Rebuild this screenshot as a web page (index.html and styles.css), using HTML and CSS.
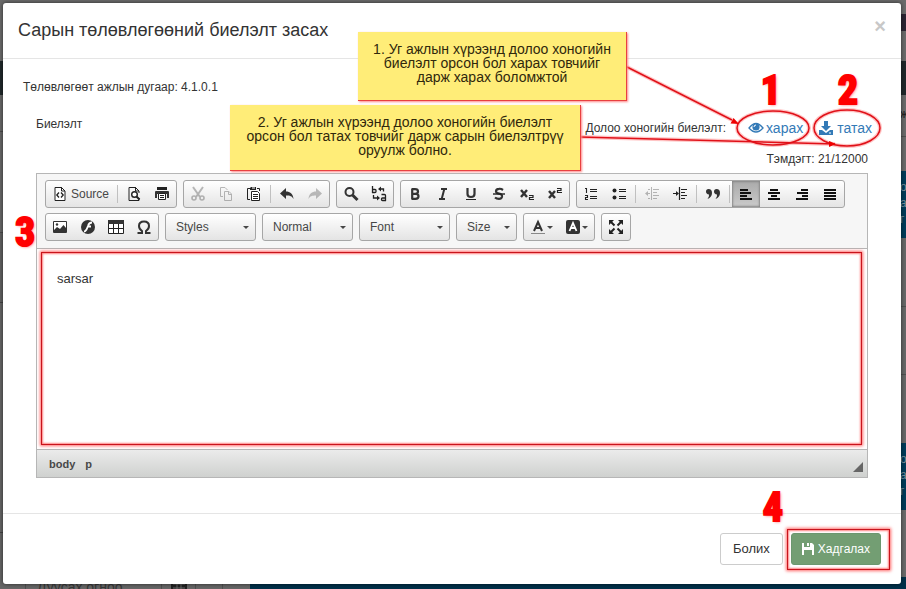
FILE: index.html
```html
<!DOCTYPE html>
<html lang="mn">
<head>
<meta charset="utf-8">
<meta name="viewport" content="width=device-width, initial-scale=1">
<title>Сарын төлөвлөгөөний биелэлт засах</title>
<link rel="stylesheet" href="styles.css">
</head>
<body>
<div class="backdrop" aria-hidden="true">
  <div class="edge-left"></div>
  <div class="edge-right">
    <span class="peek peek-row">ж</span>
    <span class="peek peek-card">о<br>аз<br>г</span>
    <span class="peek peek-card2">о<br>аз<br>г</span>
  </div>
  <div class="edge-bottom">
    <span class="date-label">Дуусах огноо</span>
    <svg class="calendar" width="16" height="16" viewBox="0 0 16 16"><path d="M0 2h16v14H0zM3 0h2v3H3zM11 0h2v3h-2z" fill="#222"/><path d="M2 7h12M2 11h12M6 5v9M10 5v9" stroke="#666"/></svg>
  </div>
</div>

<div class="modal" role="dialog" aria-labelledby="title">
  <header class="modal-header">
    <h1 id="title">Сарын төлөвлөгөөний биелэлт засах</h1>
    <button class="close" type="button" aria-label="Хаах">×</button>
  </header>

  <main class="modal-body">
    <p class="work-number">Төлөвлөгөөт ажлын дугаар: 4.1.0.1</p>
    <div class="field">
      <div class="field-head">
        <label for="report">Биелэлт</label>
        <div class="weekly">
          <span class="weekly-label">Долоо хоногийн биелэлт:</span>
          <a class="view" href="#view"><svg width="16" height="14" viewBox="0 0 16 14"><path d="M1 7Q8-2 15 7Q8 15 1 7Z" fill="none" stroke="currentColor" stroke-width="1.3"/><circle cx="8" cy="6" r="3.6" fill="currentColor"/><path d="M6 6a2 2 0 0 1 2-2" fill="none" stroke="#fff"/></svg>харах</a>
          <a class="download" href="#download"><svg width="14" height="14" viewBox="0 0 14 14"><path d="M5 0h4v5h3L7 10 2 5h3zM0 9h3l4 3 4-3h3v5H0z" fill="currentColor"/><path d="M10 12h2" stroke="#fff"/></svg>татах</a>
        </div>
      </div>
      <p class="counter">Тэмдэгт: 21/12000</p>

      <div class="editor">
        <div class="toolbar" role="toolbar">
          <div class="group">
            <button type="button" class="source"><svg viewBox="0 0 16 16"><path d="M3 1.500h6.500L13 5v9.500H3z" fill="#fff" stroke="#222"/><path d="M9.500 1v4H13" fill="none" stroke="#222"/><path d="M7 6.500 4.800 9 7 11.500M9 6.500 11.200 9 9 11.500" fill="none" stroke="#222" stroke-width="1.300"/></svg>Source</button>
            <span class="sep"></span>
            <button type="button" aria-label="Preview"><svg viewBox="0 0 16 16"><path d="M13 12v2.500H3v-13h6.500L13 5v2" fill="none" stroke="#222"/><path d="M9.500 1v4H13" fill="none" stroke="#222"/><circle cx="8.500" cy="8.500" r="2.800" fill="#fff" stroke="#222" stroke-width="1.400"/><path d="m10.500 10.500 3 3" stroke="#222" stroke-width="2"/></svg></button>
            <button type="button" aria-label="Print"><svg viewBox="0 0 16 16"><path d="M3 1h10v3H3z" fill="#222"/><path d="M1 6q0-1 1-1h12q1 0 1 1v6h-2V8H3v4H1z" fill="#333"/><path d="M4.500 7.500h7v6h-7z" fill="#fff" stroke="#222"/><path d="M6 9.500h4M6 11.500h4" stroke="#222"/></svg></button>
          </div>
          <div class="group">
            <button type="button" class="off" disabled aria-label="Cut"><svg viewBox="0 0 16 16"><path d="m3 1 7 10M13 1 6 11" stroke="#222" stroke-width="2"/><circle cx="4" cy="12" r="2" fill="none" stroke="#222" stroke-width="1.600"/><circle cx="12" cy="12" r="2" fill="none" stroke="#222" stroke-width="1.600"/></svg></button>
            <button type="button" class="off" disabled aria-label="Copy"><svg viewBox="0 0 16 16"><path d="M5 10.500H2.500v-9H7L9.500 4M6.500 5.500H11L13.500 8v6.500h-7zM10.500 6v2.500h3" fill="none" stroke="#222"/></svg></button>
            <button type="button" aria-label="Paste"><svg viewBox="0 0 16 16"><path d="M4 2.500H1.500v11H4M11 2.500h2.500V5" fill="none" stroke="#222"/><path d="M5 1h5v3H4V2z" fill="#222"/><path d="M6 2h3" stroke="#fff"/><path d="M5.500 5.500h6l2 2v7h-8z" fill="#fff" stroke="#222"/><path d="M7 8.500h5M7 10.500h5M7 12.500h5" stroke="#222"/></svg></button>
            <span class="sep"></span>
            <button type="button" aria-label="Undo"><svg viewBox="0 0 16 16"><path d="M1 7.500 7 2v3.500c4 0 7 2 7.500 7.500C13 10 11 9.500 7 9.500V13z" fill="#333"/></svg></button>
            <button type="button" class="off" disabled aria-label="Redo"><svg viewBox="0 0 16 16"><path d="M15 7.500 9 2v3.500c-4 0-7 2-7.500 7.500C3 10 5 9.500 9 9.500V13z" fill="#333"/></svg></button>
          </div>
          <div class="group">
            <button type="button" aria-label="Find"><svg viewBox="0 0 16 16"><circle cx="6.500" cy="6" r="4" fill="none" stroke="#333" stroke-width="2"/><path d="m9.500 9 5 5" stroke="#333" stroke-width="3"/></svg></button>
            <button type="button" aria-label="Replace"><svg viewBox="0 0 16 16"><path d="M1.500 0v7M1 3.500h3q1 0 1 1v1q0 1-1 1H1M10.500 8.500h3q1 0 1 1v5.500M15 14.500h-3.500q-1 0-1-1v-.500q0-1 1-1H15M9 3h3.500v2.500M2.500 9v3H6" fill="none" stroke="#222" stroke-width="1.300"/><path d="m7 3 3-2.500v5zM9 12l-3-2.500v5z" fill="#222"/></svg></button>
          </div>
          <div class="group">
            <button type="button" aria-label="Bold"><svg viewBox="0 0 16 16"><path d="M4.500 3.200H8q3 0 3 2.300Q11 7.800 8 7.800H5M5 7.800h3.500q3 0 3 2.500t-3 2.500h-4M5.200 3v10" fill="none" stroke="#333" stroke-width="2.200"/></svg></button>
            <button type="button" aria-label="Italic"><svg viewBox="0 0 16 16"><path d="M6 3h6M4 13h6M9.300 3 6.700 13" stroke="#333" stroke-width="2"/></svg></button>
            <button type="button" aria-label="Underline"><svg viewBox="0 0 16 16"><path d="M4.500 2v6q0 3 3.500 3t3.500-3V2" fill="none" stroke="#333" stroke-width="2.200"/><path d="M3 13.500h10" stroke="#222"/></svg></button>
            <button type="button" aria-label="Strikethrough"><svg viewBox="0 0 16 16"><path d="M12 4Q10 2.500 8 2.800 5 3 5 5.200 5 7 8 7.600 11.500 8.300 11 10.700 10.500 12.800 8 12.800 5.500 12.800 4 11.500" fill="none" stroke="#333" stroke-width="2.200"/><path d="M2 8h12" stroke="#222" stroke-width="1.400"/></svg></button>
            <button type="button" aria-label="Subscript"><svg viewBox="0 0 16 16"><path d="m2 4 6 7M8 4l-6 7" stroke="#333" stroke-width="2.400"/><path d="M10 9.500h4v2h-3.500v2H15" fill="none" stroke="#222" stroke-width="1.200"/></svg></button>
            <button type="button" aria-label="Superscript"><svg viewBox="0 0 16 16"><path d="m2 5 6 7M8 5l-6 7" stroke="#333" stroke-width="2.400"/><path d="M10 2.500h4v2h-3.500v2H15" fill="none" stroke="#222" stroke-width="1.200"/></svg></button>
          </div>
          <div class="group">
            <button type="button" aria-label="Numbered list"><svg viewBox="0 0 16 16"><path d="M7 3.500h7M7 5.500h7M7 10.500h7M7 12.500h7" stroke="#222" stroke-width="1.200"/><path d="M2 2.500h1.500V7M2 9.500h2.500v2H2.500v2H5" fill="none" stroke="#222" stroke-width="1.100"/></svg></button>
            <button type="button" aria-label="Bulleted list"><svg viewBox="0 0 16 16"><path d="M8 3.500h7M8 5.500h7M8 10.500h7M8 12.500h7" stroke="#222" stroke-width="1.200"/><circle cx="3.500" cy="4.500" r="2" fill="#222"/><circle cx="3.500" cy="11.500" r="2" fill="#222"/></svg></button>
            <span class="sep"></span>
            <button type="button" class="off" disabled aria-label="Outdent"><svg viewBox="0 0 16 16"><path d="M7.500 1v13M9 3.500h6M9 6.500h4M9 9.500h6M9 12.500h4M2 7.500h4M4 3.500h2M4 12.500h2" stroke="#222"/><path d="m1 7.500 3-2.500v5z" fill="#222"/></svg></button>
            <button type="button" aria-label="Indent"><svg viewBox="0 0 16 16"><path d="M7.500 1v13M9 3.500h6M9 6.500h4M9 9.500h6M9 12.500h4M1 7.500h4" stroke="#222" stroke-width="1.200"/><path d="M7 7.500 4 5v5z" fill="#222"/></svg></button>
            <span class="sep"></span>
            <button type="button" aria-label="Quote"><svg viewBox="0 0 16 16"><path d="M3.500 3Q7 3 7 7q0 4-4.500 6 2-3 1.500-4.500Q1 8 1 5.500 1 3 3.500 3zM11.500 3Q15 3 15 7q0 4-4.500 6 2-3 1.500-4.500Q9 8 9 5.500 9 3 11.500 3z" fill="#333"/></svg></button>
            <span class="sep"></span>
            <button type="button" class="on" aria-pressed="true" aria-label="Align left"><svg viewBox="0 0 16 16"><path d="M2 4h8M2 7h11M2 10h7M2 13h12" stroke="#111" stroke-width="2"/></svg></button>
            <button type="button" aria-label="Center"><svg viewBox="0 0 16 16"><path d="M4 4h8M2 7h12M5 10h6M2 13h12" stroke="#111" stroke-width="2"/></svg></button>
            <button type="button" aria-label="Align right"><svg viewBox="0 0 16 16"><path d="M7 4h7M3 7h11M8 10h6M2 13h12" stroke="#111" stroke-width="2"/></svg></button>
            <button type="button" aria-label="Justify"><svg viewBox="0 0 16 16"><path d="M2 4h12M2 7h12M2 10h12M2 13h12" stroke="#111" stroke-width="2"/></svg></button>
          </div>
          <div class="break"></div>
          <div class="group">
            <button type="button" aria-label="Image"><svg viewBox="0 0 16 16"><path d="M1.500 2.500h13v11h-13z" fill="#fff" stroke="#333"/><path d="m2 11 3-3 3 2 3.500-4L14 9v4H2z" fill="#333"/><circle cx="5" cy="5.500" r="1.200" fill="#333"/></svg></button>
            <button type="button" aria-label="Flash"><svg viewBox="0 0 16 16"><circle cx="8" cy="8" r="7" fill="#333"/><path d="M12 3.500Q9 3.500 8 7L6.500 10.500Q5.500 12.500 4 12.500M7.500 7.500h3.500" fill="none" stroke="#fff" stroke-width="1.800"/></svg></button>
            <button type="button" aria-label="Table"><svg viewBox="0 0 16 16"><path d="M.5 1.500h15v13H.5z" fill="#fff" stroke="#222"/><path d="M0 1h16v4H0z" fill="#333"/><path d="M1 9.500h14M5.500 5v9M10.500 5v9" stroke="#222"/></svg></button>
            <button type="button" aria-label="Special character"><svg viewBox="0 0 16 16"><path d="M1.500 14H6v-2Q3 10 3 7 3 2.500 8 2.500T13 7q0 3-3 5v2h4.500" fill="none" stroke="#333" stroke-width="2"/></svg></button>
          </div>
          <span class="combo"><select aria-label="Styles"><option>Styles</option></select></span>
          <span class="combo"><select aria-label="Format"><option>Normal</option></select></span>
          <span class="combo"><select aria-label="Font"><option>Font</option></select></span>
          <span class="combo small"><select aria-label="Size"><option>Size</option></select></span>
          <div class="group">
            <button type="button" class="drop" aria-label="Text color"><svg viewBox="0 0 16 16"><path d="m4 12 4-9 4 9M5.500 9h5" fill="none" stroke="#333" stroke-width="2"/><path d="M1 14.500h14" stroke="#888"/></svg></button>
            <button type="button" class="drop" aria-label="Background color"><svg viewBox="0 0 16 16"><rect x="1" y="1" width="14" height="14" rx="2" fill="#333"/><path d="m4.500 12 3.500-8 3.500 8M6 9h4" fill="none" stroke="#fff" stroke-width="1.800"/></svg></button>
          </div>
          <div class="group">
            <button type="button" aria-label="Maximize"><svg viewBox="0 0 16 16"><path d="m2 2 4.500 4.500M14 2 9.500 6.500M2 14l4.500-4.500M14 14 9.500 9.500" stroke="#222" stroke-width="2"/><path d="M1 1h5L1 6zM15 1h-5l5 5zM1 15h5l-5-5zM15 15h-5l5-5z" fill="#222"/></svg></button>
          </div>
        </div>
        <div class="contents">
          <textarea id="report" spellcheck="false">sarsar</textarea>
          <span class="mark"></span>
        </div>
        <div class="status"><span>body</span><span>p</span><i class="resizer"></i></div>
      </div>
    </div>
  </main>

  <footer class="modal-footer">
    <button class="btn" type="button">Болих</button>
    <div class="save-wrap">
      <button class="btn save" type="button"><svg width="12" height="12" viewBox="0 0 12 12"><path d="M0 0h2v4h6V0h2l2 2v10h-2V7H2v5H0zM5 0h2v3H5z" fill="#fff"/></svg>Хадгалах</button>
      <span class="mark"></span>
    </div>
  </footer>

  <div class="notes">
    <svg class="arrows" width="330" height="120" viewBox="570 40 330 120">
      <g class="shade"><path d="M627 67 732 120M580 137l255 7"/><ellipse cx="773" cy="128" rx="36" ry="17"/><ellipse cx="847" cy="128" rx="33" ry="18"/></g>
      <g class="line"><path d="M627 67 732 120M580 137l255 7"/><ellipse cx="773" cy="128" rx="36" ry="17"/><ellipse cx="847" cy="128" rx="33" ry="18"/></g>
      <path d="m739 124-8.500-.5 3-5.500zM836 144l-7 3v-6z" fill="#e00"/>
    </svg>
    <p class="note note-1">1. Уг ажлын хүрээнд долоо хоногийн<br>биелэлт орсон бол харах товчийг<br>дарж харах боломжтой</p>
    <p class="note note-2">2. Уг ажлын хүрээнд долоо хоногийн биелэлт<br>орсон бол татах товчийг дарж сарын биелэлтрүү<br>оруулж болно.</p>
    <span class="num num-1">1</span>
    <span class="num num-2">2</span>
    <span class="num num-3">3</span>
    <span class="num num-4">4</span>
  </div>
</div>
</body>
</html>
```
FILE: styles.css
```css
* { box-sizing: border-box; }
body {
  margin: 0;
  min-height: 100vh;
  padding: 3px 5px 5px 3px;
  position: relative;
  overflow: hidden;
  background: #6b6b6b;
  color: #333;
  font: 12px/18px "Liberation Sans", Arial, sans-serif;
}
h1, p { margin: 0; }
button, select, textarea { font: inherit; color: inherit; }

/* page behind the dialog */
.backdrop { position: absolute; inset: 0; }
.edge-left, .edge-right { position: absolute; top: 0; bottom: 0; width: 20px; }
.edge-left {
  left: 0;
  background: linear-gradient(#6b6b6b 61px, #20282b 61px 95px, #686868 95px 131px, #4c4c4c 131px 132px, #686868 132px 232px, #4c4c4c 232px 233px, #626262 233px 302px, #444 302px 303px, #666 303px 532px, #444 532px 533px, #666 533px);
}
.edge-right {
  right: 0;
  background: linear-gradient(#6b6b6b 14px, #2c2432 14px 31px, #6b6b6b 31px 61px, #20282b 61px 95px, #6b6b6b 95px 136px, #505050 136px 137px, #6b6b6b 137px 171px, #003c5a 171px 238px, #686868 238px 306px, #505050 306px 307px, #686868 307px 374px, #505050 374px 375px, #686868 375px 443px, #003c5a 443px 510px, #6b6b6b 510px 579px, #003049 579px);
}
.peek { position: absolute; left: 14px; line-height: 16px; color: #78909c; }
.peek-row { top: 106px; color: #222; }
.peek-card { top: 179px; }
.peek-card2 { top: 451px; }
.edge-bottom {
  position: absolute;
  inset: auto 0 0 0;
  height: 12px;
  overflow: hidden;
  background: linear-gradient(90deg, #666 25px, #505050 25px 26px, #666 26px 161px, #505050 161px 162px, #666 162px 195px, #505050 195px 196px, #666 196px 222px, #505050 222px 223px, #666 223px 250px, #003049 250px);
}
.date-label { position: absolute; left: 37px; top: 1px; font-size: 14px; color: #383838; }
.calendar { position: absolute; left: 171px; top: 0; }

.modal {
  position: relative;
  background: #fff;
  border-radius: 3px;
  box-shadow: 0 0 4px rgba(0, 0, 0, .6);
}
.modal-header {
  display: flex;
  justify-content: space-between;
  height: 56px;
  padding: 15px;
  border-bottom: 1px solid #e5e5e5;
}
h1 { font-size: 18px; line-height: 25px; font-weight: 400; }
.close {
  align-self: flex-start;
  padding: 0;
  border: 0;
  background: none;
  color: #c8c8c8;
  font-size: 20px;
  line-height: 16px;
  font-weight: 700;
}
.modal-body { padding: 19px 33px 35px; }
.work-number { margin-left: -13px; }
.field-head { display: flex; justify-content: space-between; align-items: flex-start; padding-top: 19px; }
.weekly { display: flex; align-items: center; margin: 3px -4px 0 0; line-height: 20px; }
.weekly a { display: flex; align-items: center; color: #337ab7; font-size: 14px; text-decoration: none; }
.view { gap: 2px; margin-left: 22px; }
.download { gap: 4px; margin-left: 16px; }
.counter { padding: 12px 0 5px; text-align: right; }

.editor { border: 1px solid #b6b6b6; }
.toolbar {
  display: flex;
  flex-wrap: wrap;
  column-gap: 6px;
  padding: 6px 8px 7px;
  background: #f6f6f6;
  border-bottom: 1px solid #b6b6b6;
}
.break { flex-basis: 100%; height: 5px; }
.group, .combo {
  display: flex;
  height: 28px;
  border: 1px solid #a6a6a6;
  border-radius: 3px;
  background: linear-gradient(#fff, #e4e4e4);
}
.group button { display: flex; align-items: center; height: 26px; padding: 5px 6px; border: 0; background: none; color: #474747; }
.group svg { display: block; flex: none; width: 16px; height: 16px; }
.group .source { gap: 3px; width: 69px; }
.group .off { opacity: .3; }
.group .on { background: linear-gradient(#aaa, #cacaca); box-shadow: inset 0 0 2px 1px #888; }
.sep { width: 1px; height: 18px; margin: 4px 2px; background: #c0c0c0; }
.combo { position: relative; width: 91px; }
.small { width: 61px; }
.combo select { appearance: none; width: 100%; padding: 0 10px; border: 0; background: none; color: #474747; }
.combo::after, .drop::after { content: ""; border: 3px solid transparent; border-top-color: #474747; border-bottom: 0; }
.combo::after { position: absolute; right: 6px; top: 12px; }
.drop { gap: 1px; width: 35px; }

.contents { position: relative; height: 200px; }
textarea { display: block; width: 100%; height: 100%; padding: 20px; border: 0; resize: none; background: #fff; font-size: 13px; line-height: 20px; }
.mark { position: absolute; border: 1px solid #c8141c; box-shadow: 0 0 3px 1px #ff6a6a, inset 0 0 2px 1px #ff8080; pointer-events: none; }
.contents .mark { inset: 3px 5px 4px 4px; }
.status {
  display: flex;
  gap: 10px;
  position: relative;
  padding: 5px 12px 4px;
  border-top: 1px solid #b6b6b6;
  background: linear-gradient(#ebebeb, #cfd1cf);
  color: #484848;
  font-size: 11px;
  font-weight: 700;
}
.resizer { margin: 7px -8px 0 auto; border: 5px solid #666; border-top-color: transparent; border-left-color: transparent; height: 10px; }

.modal-footer { display: flex; justify-content: flex-end; gap: 8px; padding: 19px 20px; border-top: 1px solid #e5e5e5; }
.btn { height: 32px; padding: 0 12px; border: 1px solid #ccc; border-radius: 3px; background: #fff; font-size: 13px; }
.save-wrap { position: relative; }
.save { display: flex; align-items: center; gap: 4px; padding: 0 10px; border-color: #6b976f; background: #739e73; color: #fff; font-size: 12px; }
.save-wrap .mark { inset: -4px -9px -5px -4px; }

/* callouts drawn over the dialog */
.notes { position: absolute; inset: 0; pointer-events: none; }
.note {
  position: absolute;
  padding: 10px 0 16px;
  background: #ffed78;
  border: solid #e84040;
  border-width: 0 1px 1px 0;
  box-shadow: 1px 1px 2px #f88;
  color: #30280c;
  font-size: 14px;
  line-height: 14px;
  text-align: center;
}
.note-1 { right: 274px; top: 29px; width: 269px; }
.note-2 { right: 320px; top: 102px; width: 351px; padding-bottom: 13px; }
.arrows { position: absolute; right: 1px; top: 37px; fill: none; }
.shade { stroke: #ffa0a0; stroke-width: 4; opacity: .6; }
.line { stroke: #e01018; stroke-width: 1.5; }
.num {
  position: absolute;
  color: #f00;
  font: 700 40px/40px Impact, "Roboto Condensed", "Liberation Sans", sans-serif;
  -webkit-text-stroke: 2px #f00;
  text-shadow: 1px 1px 3px #f66;
}
.num-1 { right: 120px; top: 68px; }
.num-2 { right: 43px; top: 68px; }
.num-3 { left: 12px; top: 210px; }
.num-4 { right: 118px; top: 485px; }
```
